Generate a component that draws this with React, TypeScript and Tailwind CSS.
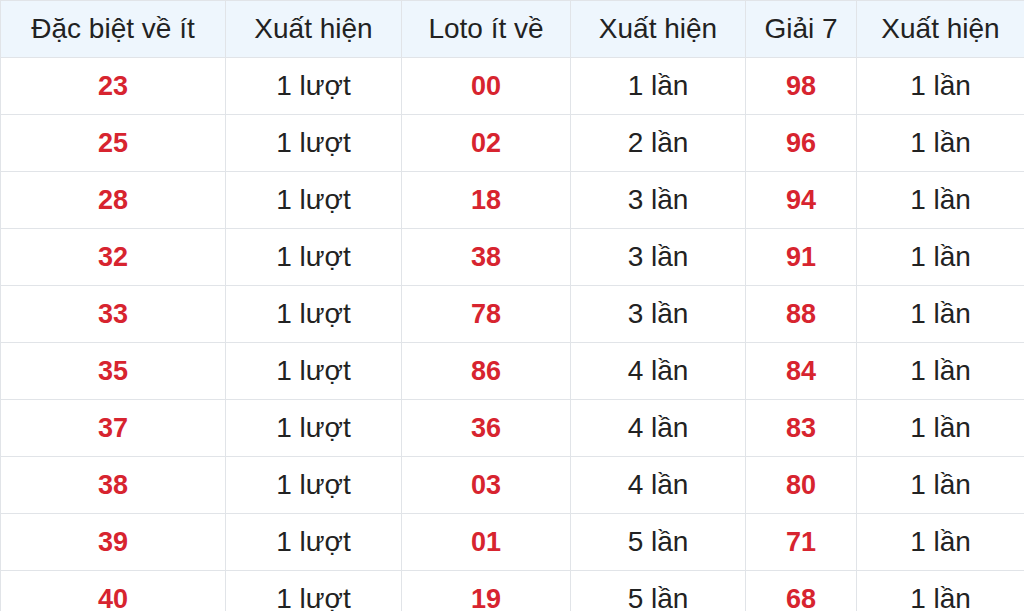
import React from "react";

const rows: [string, string, string, string, string, string][] = [
  ["23", "1 lượt", "00", "1 lần", "98", "1 lần"],
  ["25", "1 lượt", "02", "2 lần", "96", "1 lần"],
  ["28", "1 lượt", "18", "3 lần", "94", "1 lần"],
  ["32", "1 lượt", "38", "3 lần", "91", "1 lần"],
  ["33", "1 lượt", "78", "3 lần", "88", "1 lần"],
  ["35", "1 lượt", "86", "4 lần", "84", "1 lần"],
  ["37", "1 lượt", "36", "4 lần", "83", "1 lần"],
  ["38", "1 lượt", "03", "4 lần", "80", "1 lần"],
  ["39", "1 lượt", "01", "5 lần", "71", "1 lần"],
  ["40", "1 lượt", "19", "5 lần", "68", "1 lần"],
];

const headers = ["Đặc biệt về ít", "Xuất hiện", "Loto ít về", "Xuất hiện", "Giải 7", "Xuất hiện"];
const widths = ["w-[225px]", "w-[176px]", "w-[169px]", "w-[175px]", "w-[111px]", "w-[168px]"];

export default function App() {
  return (
    <div className="w-[1024px] h-[611px] overflow-hidden bg-white" style={{ fontFamily: "'Liberation Sans', Arial, sans-serif" }}>
      <table className="w-[1024px] border-collapse table-fixed">
        <colgroup>
          {widths.map((w, i) => (
            <col key={i} className={w} />
          ))}
        </colgroup>
        <thead>
          <tr className="h-[57px] bg-[#eef6fd]">
            {headers.map((h, i) => (
              <th key={i} className="border border-[#e1e4e8] text-[28px] leading-none font-normal text-[#222] text-center align-middle p-0">
                {h}
              </th>
            ))}
          </tr>
        </thead>
        <tbody>
          {rows.map((r, ri) => (
            <tr key={ri} className="h-[57px]">
              {r.map((c, ci) => (
                <td
                  key={ci}
                  className={
                    ci % 2 === 0
                      ? "border border-[#e1e4e8] p-0 leading-none text-center text-[27px] font-bold text-[#d7242f]"
                      : "border border-[#e1e4e8] p-0 leading-none text-center text-[28px] text-[#222]"
                  }
                >
                  {c}
                </td>
              ))}
            </tr>
          ))}
        </tbody>
      </table>
    </div>
  );
}
